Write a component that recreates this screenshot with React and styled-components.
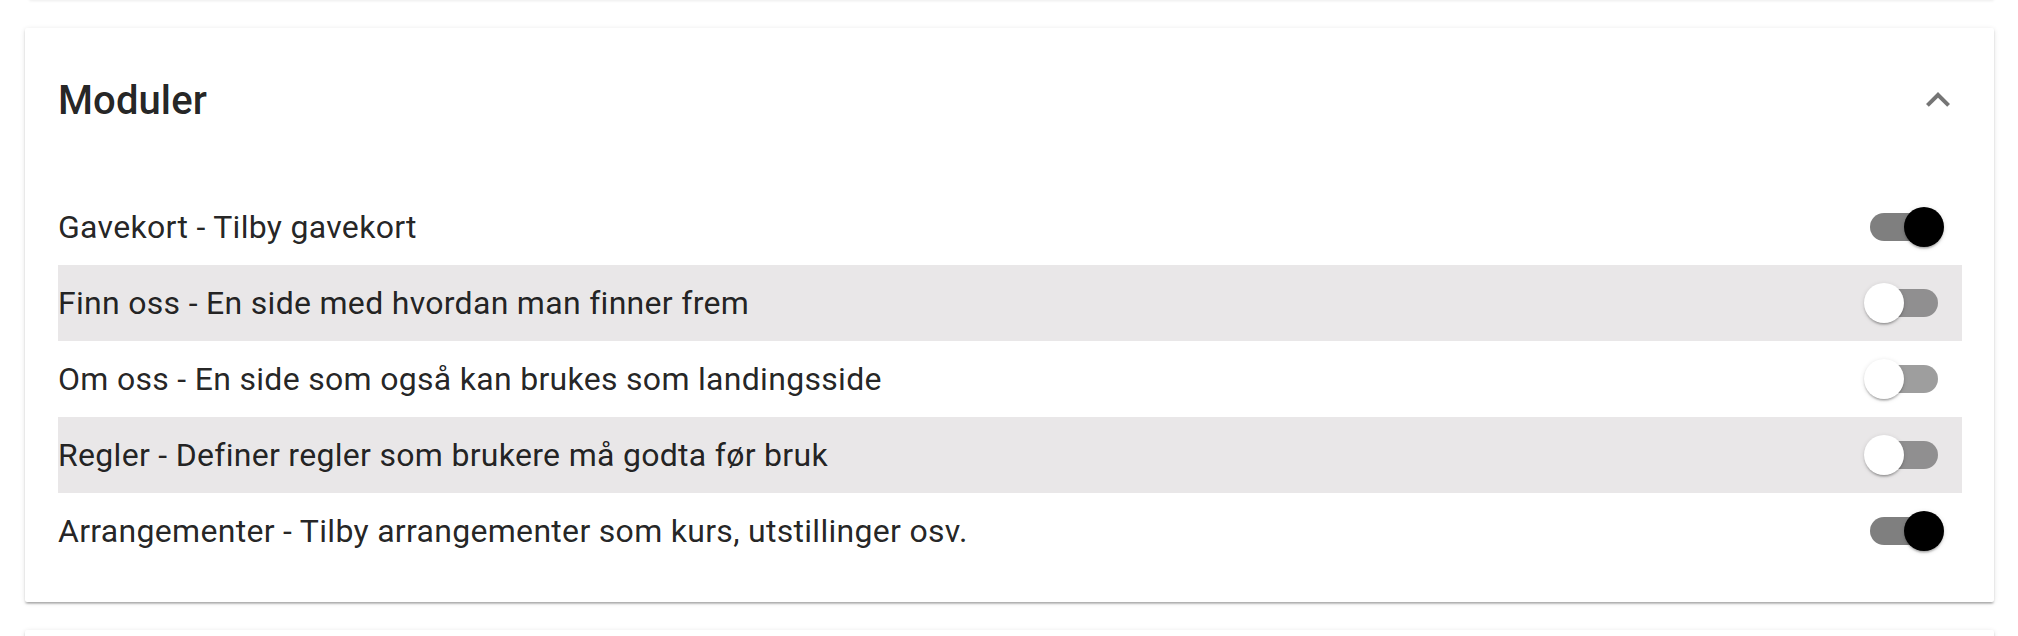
import React, { useState } from "react";
import styled, { createGlobalStyle } from "styled-components";

const GlobalStyle = createGlobalStyle`
  html, body {
    margin: 0;
    padding: 0;
    background: #fff;
    font-family: Roboto, "Liberation Sans", sans-serif;
    color: rgba(0, 0, 0, 0.87);
  }
`;

const Page = styled.div`
  display: flex;
  flex-direction: column;
  gap: 28px;
  padding: 0 24px 0 25px;
  overflow: hidden;
  height: 636px;
`;

const Card = styled.section`
  background: #fff;
  border-radius: 2px;
  box-shadow: 0 3px 2px -2px rgba(0, 0, 0, 0.2), 0 2px 2px 0 rgba(0, 0, 0, 0.14),
    0 1px 5px 0 rgba(0, 0, 0, 0.12);
`;

const PrevCard = styled(Card)`
  margin: -41px 0 0 4px;
  height: 41px;
  flex-shrink: 0;
  box-shadow: 0 1px 3px 0 rgba(0, 0, 0, 0.08);
`;

const NextCard = styled(Card)`
  height: 60px;
  flex-shrink: 0;
`;

const ModuleCard = styled(Card)`
  padding: 0 32px 33px 33px;
  flex-shrink: 0;
`;

const Header = styled.div`
  height: 144px;
  display: flex;
  align-items: center;
  justify-content: space-between;
`;

const Title = styled.h2`
  margin: 0;
  font-size: 40px;
  font-weight: 500;
  letter-spacing: 0.1px;
  color: rgba(0, 0, 0, 0.87);
`;

const ExpandButton = styled.button`
  width: 48px;
  height: 48px;
  padding: 0;
  border: 0;
  background: none;
  color: rgba(0, 0, 0, 0.54);
  display: flex;
  align-items: center;
  justify-content: center;
  cursor: pointer;
`;

const List = styled.div`
  padding-top: 17px;
  display: flex;
  flex-direction: column;
`;

const Row = styled.label`
  height: 76px;
  display: flex;
  align-items: center;
  justify-content: space-between;
  background: ${(p) => (p.$shaded ? "#e9e7e8" : "transparent")};
  cursor: pointer;
`;

const Label = styled.span`
  font-size: 32px;
  letter-spacing: 0.3px;
  color: rgba(0, 0, 0, 0.87);
`;

const SwitchRoot = styled.span`
  position: relative;
  width: 116px;
  height: 76px;
  flex-shrink: 0;
`;

const Track = styled.span`
  position: absolute;
  left: 24px;
  top: 24px;
  width: 68px;
  height: 28px;
  border-radius: 14px;
  background: #000;
  opacity: ${(p) => (p.$on ? 0.5 : 0.38)};
`;

const Thumb = styled.span`
  position: absolute;
  top: 18px;
  left: ${(p) => (p.$on ? 58 : 18)}px;
  width: 40px;
  height: 40px;
  border-radius: 50%;
  background: ${(p) => (p.$on ? "#000" : "#fff")};
  box-shadow: 0 3px 2px -2px rgba(0, 0, 0, 0.2), 0 2px 2px 0 rgba(0, 0, 0, 0.14),
    0 1px 5px 0 rgba(0, 0, 0, 0.12);
  transition: left 150ms;
`;

const Switch = ({ on, onToggle }) => (
  <SwitchRoot onClick={onToggle}>
    <Track $on={on} />
    <Thumb $on={on} />
  </SwitchRoot>
);

const ChevronUp = () => (
  <svg width="48" height="48" viewBox="0 0 24 24" fill="currentColor">
    <path d="M12 8l-6 6 1.41 1.41L12 10.83l4.59 4.58L18 14z" />
  </svg>
);

const initialModules = [
  { id: "gavekort", text: "Gavekort - Tilby gavekort", on: true },
  { id: "finn", text: "Finn oss - En side med hvordan man finner frem", on: false },
  { id: "om", text: "Om oss - En side som også kan brukes som landingsside", on: false },
  { id: "regler", text: "Regler - Definer regler som brukere må godta før bruk", on: false },
  {
    id: "arr",
    text: "Arrangementer - Tilby arrangementer som kurs, utstillinger osv.",
    on: true
  }
];

const App = () => {
  const [modules, setModules] = useState(initialModules);

  const toggle = (id) =>
    setModules((list) => list.map((m) => (m.id === id ? { ...m, on: !m.on } : m)));

  return (
    <>
      <GlobalStyle />
      <Page>
        <PrevCard />
        <ModuleCard>
          <Header>
            <Title>Moduler</Title>
            <ExpandButton aria-label="Skjul">
              <ChevronUp />
            </ExpandButton>
          </Header>
          <List>
            {modules.map((m, i) => (
              <Row key={m.id} $shaded={i % 2 === 1}>
                <Label>{m.text}</Label>
                <Switch on={m.on} onToggle={() => toggle(m.id)} />
              </Row>
            ))}
          </List>
        </ModuleCard>
        <NextCard />
      </Page>
    </>
  );
};

export default App;
